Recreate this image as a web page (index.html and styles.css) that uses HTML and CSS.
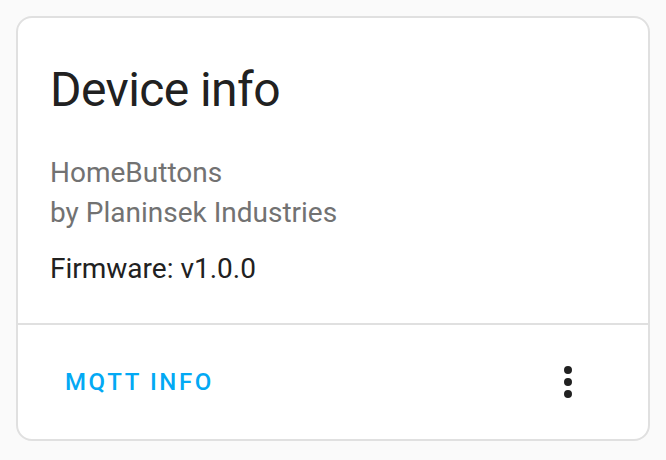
FILE: index.html
```html
<!DOCTYPE html>
<html>
<head>
<meta charset="utf-8">
<link rel="stylesheet" href="styles.css">
</head>
<body>
<div class="card">
  <div class="header">Device info</div>
  <div class="content">
    <div class="muted">HomeButtons</div>
    <div class="muted">by Planinsek Industries</div>
    <div class="firmware">Firmware: v1.0.0</div>
  </div>
  <div class="actions">
    <button class="btn">MQTT INFO</button>
    <button class="icon-btn" aria-label="menu">
      <svg width="48" height="48" viewBox="0 0 24 24"><path fill="#212121" d="M12,16A2,2 0 0,1 14,18A2,2 0 0,1 12,20A2,2 0 0,1 10,18A2,2 0 0,1 12,16M12,10A2,2 0 0,1 14,12A2,2 0 0,1 12,14A2,2 0 0,1 10,12A2,2 0 0,1 12,10M12,4A2,2 0 0,1 14,6A2,2 0 0,1 12,8A2,2 0 0,1 10,6A2,2 0 0,1 12,4Z"/></svg>
    </button>
  </div>
</div>
</body>
</html>
```
FILE: styles.css
```css
html, body {
  margin: 0;
  padding: 0;
  background: #fafafa;
}
body {
  padding: 16px;
  font-family: Roboto, "Liberation Sans", sans-serif;
}
.card {
  width: 630px;
  height: 421px;
  border: 2px solid #e0e0e0;
  border-radius: 16px;
  background: #fff;
  display: flex;
  flex-direction: column;
  box-sizing: content-box;
}
.header {
  font-size: 48px;
  line-height: 64px;
  letter-spacing: -0.012em;
  color: #212121;
  padding: 40px 32px 0;
}
.content {
  padding: 31px 32px 0;
  flex: 1;
}
.muted {
  font-size: 28px;
  line-height: 40px;
  color: #727272;
}
.firmware {
  font-size: 28px;
  line-height: 40px;
  color: #212121;
  margin-top: 16px;
}
.actions {
  border-top: 2px solid #e0e0e0;
  height: 114px;
  display: flex;
  align-items: center;
  justify-content: space-between;
  padding: 0 32px;
}
.btn {
  background: none;
  border: none;
  font-family: Roboto, "Liberation Sans", sans-serif;
  font-size: 24px;
  font-weight: 500;
  letter-spacing: 2.6px;
  color: #03a9f4;
  padding: 0 15px;
  height: 72px;
}
.icon-btn {
  background: none;
  border: none;
  padding: 0;
  width: 96px;
  height: 96px;
  display: flex;
  align-items: center;
  justify-content: center;
}
```
